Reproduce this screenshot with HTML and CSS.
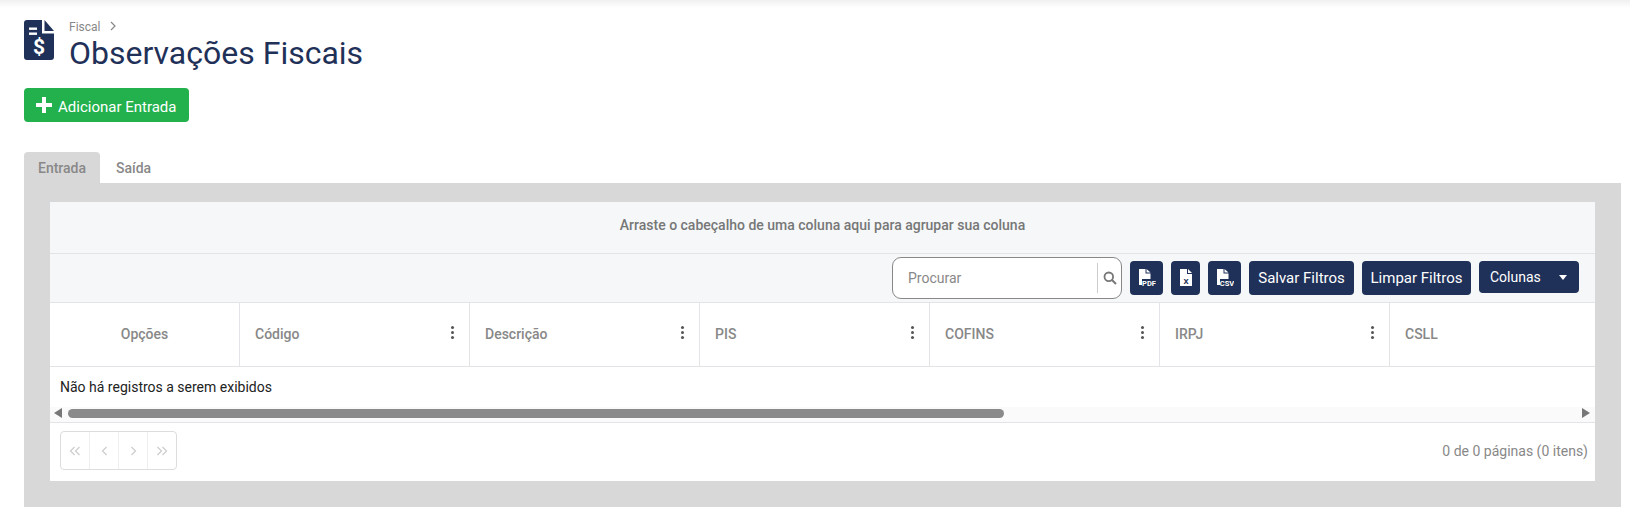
FILE: index.html
```html
<!DOCTYPE html>
<html lang="pt-BR">
<head>
  <meta charset="UTF-8">
  <title>Observações Fiscais</title>
  <link rel="stylesheet" href="styles.css">
</head>
<body>

  <div class="top-shadow"></div>

  <div class="page-head">
    <svg class="page-icon" width="30" height="40" viewBox="0 0 30 40">
      <path fill="#1f3158" d="M3 0H18V13.5H30V37a3 3 0 0 1-3 3H3a3 3 0 0 1-3-3V3a3 3 0 0 1 3-3z"/>
      <path fill="#1f3158" d="M20.5 0L30 11H20.5z"/>
      <rect x="5" y="7.5" width="8" height="2.4" fill="#fff"/>
      <rect x="5" y="12.5" width="8" height="2.4" fill="#fff"/>
      <text x="15" y="34" class="page-icon-sign">$</text>
    </svg>
    <div>
      <div class="breadcrumb">
        Fiscal
        <svg class="crumb-arrow" width="6" height="10" viewBox="0 0 6 10"><path d="M1 1l4 4-4 4" fill="none" stroke="#888" stroke-width="1.2"/></svg>
      </div>
      <h1>Observações Fiscais</h1>
    </div>
  </div>

  <button class="add-btn">
    <svg width="16" height="16" viewBox="0 0 16 16"><path fill="#fff" d="M6 0h4v6h6v4h-6v6H6v-6H0V6h6z"/></svg>
    Adicionar Entrada
  </button>

  <div class="tabs">
    <div class="tab active">Entrada</div>
    <div class="tab">Saída</div>
  </div>

  <div class="tab-panel">
    <div class="grid-card">
      <div class="group-panel">Arraste o cabeçalho de uma coluna aqui para agrupar sua coluna</div>

      <div class="toolbar">
        <div class="search">
          <span class="search-text">Procurar</span>
          <span class="search-icon">
            <svg width="14" height="14" viewBox="0 0 14 14"><circle cx="5.8" cy="5.8" r="4.3" fill="none" stroke="#777" stroke-width="1.8"/><path d="M9 9l4 4" stroke="#777" stroke-width="2"/></svg>
          </span>
        </div>
        <button class="tool-btn file-btn pdf">
          <svg width="18" height="18" viewBox="0 0 18 18">
            <path fill="#fff" d="M1 0H7.500V4.500H12.500V16H1z"/><path fill="#fff" d="M8.500 0L12.500 3.500H8.500z"/>
            <rect x="4" y="10" width="14" height="8" fill="#1f3158"/>
            <text x="11" y="16.700" class="file-label">PDF</text>
          </svg>
        </button>
        <button class="tool-btn file-btn xls">
          <svg width="14" height="18" viewBox="0 0 14 18">
            <path fill="#fff" d="M1 0H8V5H13V17H1z"/><path fill="#fff" d="M9 0L13 4H9z"/>
            <text x="7" y="15" class="file-label dark">X</text>
          </svg>
        </button>
        <button class="tool-btn file-btn csv">
          <svg width="18" height="18" viewBox="0 0 18 18">
            <path fill="#fff" d="M1 0H7.500V4.500H12.500V16H1z"/><path fill="#fff" d="M8.500 0L12.500 3.500H8.500z"/>
            <rect x="4" y="10" width="14" height="8" fill="#1f3158"/>
            <text x="11" y="16.700" class="file-label">CSV</text>
          </svg>
        </button>
        <button class="tool-btn text-btn save">Salvar Filtros</button>
        <button class="tool-btn text-btn clear">Limpar Filtros</button>
        <button class="tool-btn columns-btn">Colunas <span class="caret"></span></button>
      </div>

      <div class="grid-head">
        <div class="col col-options">Opções</div>
        <div class="col">Código<span class="col-menu"></span></div>
        <div class="col">Descrição<span class="col-menu"></span></div>
        <div class="col">PIS<span class="col-menu"></span></div>
        <div class="col">COFINS<span class="col-menu"></span></div>
        <div class="col">IRPJ<span class="col-menu"></span></div>
        <div class="col col-last">CSLL</div>
      </div>

      <div class="grid-empty">Não há registros a serem exibidos</div>

      <div class="scrollbar">
        <span class="arrow-left"></span>
        <div class="scroll-track"><div class="scroll-thumb"></div></div>
        <span class="arrow-right"></span>
      </div>

      <div class="grid-foot">
        <div class="pager">
          <span><svg width="12" height="10" viewBox="0 0 12 10"><path d="M5.500 1l-4 4 4 4M10.500 1l-4 4 4 4"/></svg></span>
          <span><svg width="7" height="10" viewBox="0 0 7 10"><path d="M5.500 1l-4 4 4 4"/></svg></span>
          <span><svg width="7" height="10" viewBox="0 0 7 10"><path d="M1.500 1l4 4-4 4"/></svg></span>
          <span><svg width="12" height="10" viewBox="0 0 12 10"><path d="M1.500 1l4 4-4 4M6.500 1l4 4-4 4"/></svg></span>
        </div>
        <div class="page-info">0 de 0 páginas (0 itens)</div>
      </div>
    </div>
  </div>

</body>
</html>
```

FILE: styles.css
```css
body {
  font-family: 'Roboto', sans-serif;
  background-color: #fff;
  margin: 0;
  padding: 0 9px 0 24px;
  height: 519px;
  box-sizing: border-box;
  overflow: hidden;
  color: #1f3158;
}

.top-shadow {
  height: 8px;
  margin: 0 -9px 0 -24px;
  background: linear-gradient(#f0f0f0, #fff);
}

.page-head {
  display: flex;
  gap: 15px;
  margin-top: 12px;
}

.page-icon {
  display: block;
}

.page-icon-sign {
  font-family: 'Roboto', sans-serif;
  font-size: 21px;
  font-weight: 700;
  fill: #fff;
  text-anchor: middle;
}

.breadcrumb {
  font-size: 12px;
  line-height: 14px;
  color: #888;
}

.crumb-arrow {
  margin-left: 7px;
}

h1 {
  font-size: 32px;
  font-weight: 400;
  line-height: 38px;
  margin: 0;
}

.add-btn {
  display: flex;
  align-items: center;
  gap: 6px;
  width: 165px;
  height: 34px;
  margin-top: 16px;
  padding: 4px 0 0 12px;
  background-color: #22b14c;
  border: none;
  border-radius: 4px;
  color: #fff;
  font-family: inherit;
  font-size: 15px;
  font-weight: 400;
}

.add-btn svg {
  margin-top: -4px;
}

.tabs {
  display: flex;
  margin-top: 30px;
}

.tab {
  height: 31px;
  line-height: 32px;
  padding: 0 16px;
  font-size: 14px;
  font-weight: 500;
  color: #888;
}

.tab.active {
  width: 76px;
  box-sizing: border-box;
  padding: 0 14px;
  background-color: #d8d8d8;
  border-radius: 4px 4px 0 0;
}

.tab-panel {
  background-color: #d8d8d8;
  padding: 19px 26px 26px;
}

.grid-card {
  background-color: #fff;
  height: 279px;
  overflow: hidden;
}

.group-panel {
  height: 52px;
  line-height: 47px;
  text-align: center;
  font-size: 14px;
  font-weight: 500;
  color: #777;
  background-color: #f6f7f9;
  border-bottom: 1px solid #e2e4e8;
  box-sizing: border-box;
}

.toolbar {
  display: flex;
  justify-content: flex-end;
  align-items: flex-start;
  gap: 8px;
  height: 49px;
  padding: 3px 16px 0 0;
  box-sizing: border-box;
  background-color: #f6f7f9;
  border-bottom: 1px solid #e2e4e8;
}

.search {
  display: flex;
  align-items: center;
  width: 230px;
  height: 42px;
  box-sizing: border-box;
  background-color: #fff;
  border: 1px solid #888;
  border-radius: 9px;
}

.search-text {
  flex: 1;
  padding-left: 15px;
  font-size: 14px;
  color: #888;
}

.search-icon {
  display: flex;
  align-items: center;
  justify-content: center;
  width: 23px;
  height: 30px;
  border-left: 1px solid #ccc;
}

.tool-btn {
  display: flex;
  align-items: center;
  justify-content: center;
  height: 34px;
  margin-top: 4px;
  padding: 0;
  background-color: #1f3158;
  border: none;
  border-radius: 4px;
  color: #fff;
  font-family: inherit;
  font-size: 15px;
}

.pdf, .csv {
  width: 33px;
}

.xls {
  width: 29px;
}

.save {
  width: 105px;
}

.clear {
  width: 109px;
}

.columns-btn {
  justify-content: flex-start;
  width: 100px;
  height: 32px;
  padding-left: 11px;
  font-size: 14px;
}

.caret {
  margin-left: 18px;
  border-left: 4.5px solid transparent;
  border-right: 4.5px solid transparent;
  border-top: 5px solid #fff;
}

.file-label {
  font-family: 'Roboto', sans-serif;
  font-size: 7.5px;
  font-weight: 700;
  fill: #fff;
  text-anchor: middle;
}

.file-label.dark {
  fill: #1f3158;
  font-size: 8px;
}

.grid-head {
  display: flex;
  height: 64px;
  border-bottom: 1px solid #e2e4e8;
  box-sizing: border-box;
  overflow: hidden;
}

.col {
  flex: 0 0 230px;
  box-sizing: border-box;
  display: flex;
  align-items: center;
  justify-content: space-between;
  padding: 0 15px 2px 15px;
  border-right: 1px solid #e2e4e8;
  font-size: 14px;
  font-weight: 500;
  color: #888;
}

.col-options {
  flex-basis: 190px;
  justify-content: center;
}

.col-last {
  border-right: none;
}

/* tres pontos do menu da coluna */
.col-menu {
  width: 3px;
  height: 3px;
  margin-bottom: 2px;
  background-color: #555;
  border-radius: 50%;
  box-shadow: 0 -5px 0 #555, 0 5px 0 #555;
}

.grid-empty {
  height: 40px;
  padding-left: 10px;
  line-height: 40px;
  font-size: 14px;
  color: #222;
}

.scrollbar {
  display: flex;
  align-items: center;
  height: 16px;
  padding: 0 5px 3px 4px;
  box-sizing: border-box;
  background-color: #fafafa;
  border-bottom: 1px solid #e2e4e8;
}

.arrow-left, .arrow-right {
  border-top: 5px solid transparent;
  border-bottom: 5px solid transparent;
}

.arrow-left {
  border-right: 8px solid #777;
}

.arrow-right {
  border-left: 8px solid #777;
}

.scroll-track {
  flex: 1;
  padding: 0 6px;
}

.scroll-thumb {
  width: 936px;
  height: 9px;
  background-color: #8a8a8a;
  border-radius: 5px;
}

.grid-foot {
  display: flex;
  justify-content: space-between;
  align-items: center;
  padding: 8px 7px 0 10px;
}

.pager {
  display: flex;
  width: 117px;
  height: 39px;
  box-sizing: border-box;
  border: 1px solid #ddd;
  border-radius: 4px;
}

.pager span {
  display: flex;
  flex: 1;
  align-items: center;
  justify-content: center;
  box-sizing: border-box;
  border-right: 1px solid #eee;
}

.pager span:last-child {
  border-right: none;
}

.pager path {
  fill: none;
  stroke: #ccc;
  stroke-width: 1.2;
}

.page-info {
  font-size: 14px;
  color: #888;
}
```
